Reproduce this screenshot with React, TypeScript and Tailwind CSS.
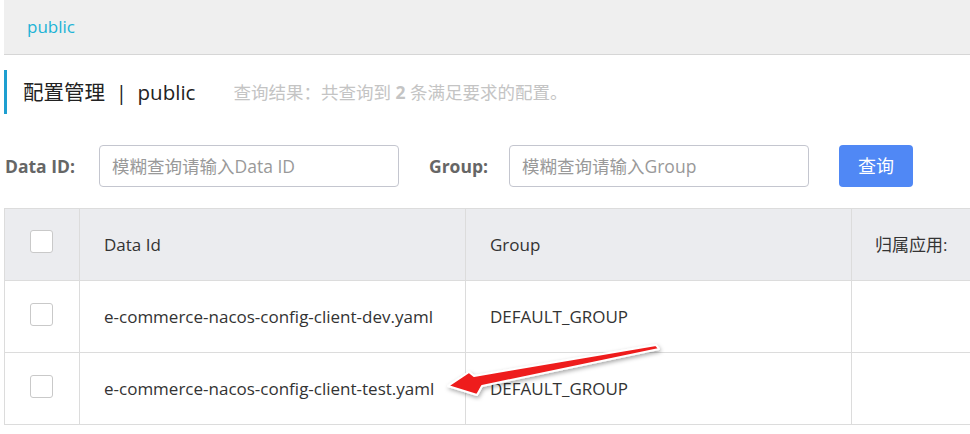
import { type ReactNode } from 'react';

const font = { fontFamily: '"Open Sans", "Noto Sans CJK SC", sans-serif' };

function Checkbox() {
  return <div className="w-[23px] h-[23px] rounded-[3px] border border-[#c9c9c9] bg-white" />;
}

function Row({ id, group, header = false }: { id: ReactNode; group: ReactNode; header?: boolean }) {
  return (
    <div
      className={`flex h-[72px] border-b border-[#dcdcdc] text-[17px] text-[#333] ${
        header ? 'bg-[#ebecef]' : 'bg-white'
      }`}
    >
      <div className="w-[75px] shrink-0 flex items-center justify-center border-r border-[#dcdcdc] pr-[2px]">
        <div className={header ? '-mt-[6px]' : '-mt-[4px]'}>
          <Checkbox />
        </div>
      </div>
      <div className="w-[386px] shrink-0 flex items-center pl-[24px] border-r border-[#dcdcdc]">{id}</div>
      <div className="w-[386px] shrink-0 flex items-center pl-[24px] border-r border-[#dcdcdc]">{group}</div>
      <div className="flex-1 flex items-center pl-[23px]">{header ? '归属应用:' : ''}</div>
    </div>
  );
}

export default function App() {
  return (
    <div className="relative w-[970px] h-[434px] overflow-hidden bg-white pl-[4px]" style={font}>
      {/* Breadcrumb bar */}
      <div className="h-[55px] bg-[#efefef] border-b border-[#d6d6d6] flex items-center pl-[23px]">
        <span className="text-[17px] text-[#20b3d6]">public</span>
      </div>

      {/* Title */}
      <div className="mt-[15px] h-[44px] border-l-[3px] border-[#1e9fd0] flex items-center pl-[16px]">
        <span className="text-[20.5px] text-[#222]">配置管理&nbsp;&nbsp;|&nbsp;&nbsp;public</span>
        <span className="ml-[38px] text-[17.5px] text-[#c4c4c4]">
          查询结果：共查询到 <b className="font-bold">2</b> 条满足要求的配置。
        </span>
      </div>

      {/* Search */}
      <div className="mt-[31px] flex items-center h-[42px]">
        <span className="w-[95px] pl-[1px] text-[17.5px] font-bold text-[#666]">Data ID:</span>
        <div className="w-[300px] h-[42px] rounded-[4px] border border-[#c4c6cf] flex items-center pl-[12px] text-[17.5px] text-[#999]">
          模糊查询请输入Data ID
        </div>
        <span className="ml-[30px] w-[80px] text-[17.5px] font-bold text-[#666]">Group:</span>
        <div className="w-[300px] h-[42px] rounded-[4px] border border-[#c4c6cf] flex items-center pl-[12px] text-[17.5px] text-[#999]">
          模糊查询请输入Group
        </div>
        <button className="ml-[30px] w-[74px] h-[42px] rounded-[4px] bg-[#5088f5] text-white text-[18px]">
          查询
        </button>
      </div>

      {/* Table */}
      <div className="mt-[21px] border-t border-l border-[#dcdcdc]">
        <Row header id="Data Id" group="Group" />
        <Row id="e-commerce-nacos-config-client-dev.yaml" group="DEFAULT_GROUP" />
        <Row id="e-commerce-nacos-config-client-test.yaml" group="DEFAULT_GROUP" />
      </div>

      {/* Annotation arrow */}
      <svg className="absolute left-[440px] top-[338px]" width="230" height="70" viewBox="0 0 230 70">
        <defs>
          <filter id="sh" x="-20%" y="-50%" width="140%" height="200%">
            <feDropShadow dx="1" dy="2" stdDeviation="2" floodColor="#000" floodOpacity="0.35" />
          </filter>
        </defs>
        <path
          d="M216 7 L219 11 L42 48 L37 57 L8 48 L29 34 L34 38 Z"
          fill="#ee1c1c"
          stroke="#fff"
          strokeWidth="2"
          strokeLinejoin="round"
          filter="url(#sh)"
        />
      </svg>
    </div>
  );
}
